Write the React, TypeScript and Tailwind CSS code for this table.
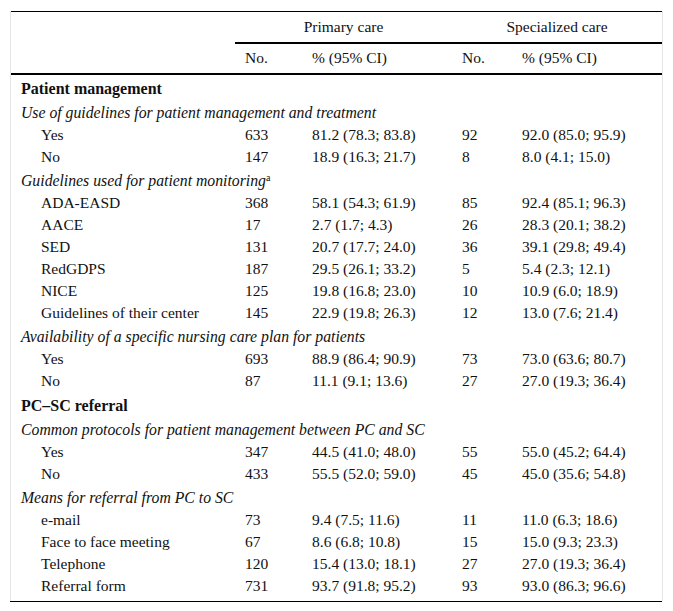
type Row =
  | { kind: "section"; label: string }
  | { kind: "group"; label: string; sup?: string }
  | { kind: "data"; label: string; pcN: string; pcP: string; scN: string; scP: string };

const rows: Row[] = [
  { kind: "section", label: "Patient management" },
  { kind: "group", label: "Use of guidelines for patient management and treatment" },
  { kind: "data", label: "Yes", pcN: "633", pcP: "81.2 (78.3; 83.8)", scN: "92", scP: "92.0 (85.0; 95.9)" },
  { kind: "data", label: "No", pcN: "147", pcP: "18.9 (16.3; 21.7)", scN: "8", scP: "8.0 (4.1; 15.0)" },
  { kind: "group", label: "Guidelines used for patient monitoring", sup: "a" },
  { kind: "data", label: "ADA-EASD", pcN: "368", pcP: "58.1 (54.3; 61.9)", scN: "85", scP: "92.4 (85.1; 96.3)" },
  { kind: "data", label: "AACE", pcN: "17", pcP: "2.7 (1.7; 4.3)", scN: "26", scP: "28.3 (20.1; 38.2)" },
  { kind: "data", label: "SED", pcN: "131", pcP: "20.7 (17.7; 24.0)", scN: "36", scP: "39.1 (29.8; 49.4)" },
  { kind: "data", label: "RedGDPS", pcN: "187", pcP: "29.5 (26.1; 33.2)", scN: "5", scP: "5.4 (2.3; 12.1)" },
  { kind: "data", label: "NICE", pcN: "125", pcP: "19.8 (16.8; 23.0)", scN: "10", scP: "10.9 (6.0; 18.9)" },
  { kind: "data", label: "Guidelines of their center", pcN: "145", pcP: "22.9 (19.8; 26.3)", scN: "12", scP: "13.0 (7.6; 21.4)" },
  { kind: "group", label: "Availability of a specific nursing care plan for patients" },
  { kind: "data", label: "Yes", pcN: "693", pcP: "88.9 (86.4; 90.9)", scN: "73", scP: "73.0 (63.6; 80.7)" },
  { kind: "data", label: "No", pcN: "87", pcP: "11.1 (9.1; 13.6)", scN: "27", scP: "27.0 (19.3; 36.4)" },
  { kind: "section", label: "PC–SC referral" },
  { kind: "group", label: "Common protocols for patient management between PC and SC" },
  { kind: "data", label: "Yes", pcN: "347", pcP: "44.5 (41.0; 48.0)", scN: "55", scP: "55.0 (45.2; 64.4)" },
  { kind: "data", label: "No", pcN: "433", pcP: "55.5 (52.0; 59.0)", scN: "45", scP: "45.0 (35.6; 54.8)" },
  { kind: "group", label: "Means for referral from PC to SC" },
  { kind: "data", label: "e-mail", pcN: "73", pcP: "9.4 (7.5; 11.6)", scN: "11", scP: "11.0 (6.3; 18.6)" },
  { kind: "data", label: "Face to face meeting", pcN: "67", pcP: "8.6 (6.8; 10.8)", scN: "15", scP: "15.0 (9.3; 23.3)" },
  { kind: "data", label: "Telephone", pcN: "120", pcP: "15.4 (13.0; 18.1)", scN: "27", scP: "27.0 (19.3; 36.4)" },
  { kind: "data", label: "Referral form", pcN: "731", pcP: "93.7 (91.8; 95.2)", scN: "93", scP: "93.0 (86.3; 96.6)" },
];

function BodyRow({ row }: { row: Row }) {
  if (row.kind === "section") {
    return (
      <tr>
        <td colSpan={5} className="h-[25px] px-[10px] pt-[3px] align-middle text-[16px] font-bold leading-[22px]">
          {row.label}
        </td>
      </tr>
    );
  }
  if (row.kind === "group") {
    return (
      <tr>
        <td colSpan={5} className="h-[24px] px-[10px] pt-[2px] align-middle text-[15.75px] italic leading-[22px]">
          {row.label}
          {row.sup && <sup className="text-[10px] not-italic">{row.sup}</sup>}
        </td>
      </tr>
    );
  }
  return (
    <tr>
      <td className="h-[22px] pl-[30px] pr-[10px] leading-[22px]">{row.label}</td>
      <td className="px-[10px] leading-[22px]">{row.pcN}</td>
      <td className="px-[10px] leading-[22px]">{row.pcP}</td>
      <td className="px-[10px] leading-[22px]">{row.scN}</td>
      <td className="px-[10px] leading-[22px]">{row.scP}</td>
    </tr>
  );
}

export default function App() {
  return (
    <div className="min-h-[611px] bg-white pl-[10px] pt-[11px] [font-family:'Liberation_Serif','Times_New_Roman',serif] text-[15.5px] text-[#111]">
      <div className="w-[653px] border-x border-[#e6e6e6]">
        <table className="w-[651px] table-fixed border-collapse">
          <colgroup>
            <col className="w-[224px]" />
            <col className="w-[67px]" />
            <col className="w-[150px]" />
            <col className="w-[60px]" />
            <col className="w-[150px]" />
          </colgroup>
          <thead>
            <tr className="border-t border-black">
              <th className="h-[31px]" />
              <th colSpan={2} className="border-b-2 border-black text-center font-normal">
                Primary care
              </th>
              <th colSpan={2} className="border-b-2 border-black text-center font-normal">
                Specialized care
              </th>
            </tr>
            <tr className="border-b-2 border-black">
              <th className="h-[31px]" />
              <th className="px-[10px] text-left font-normal">No.</th>
              <th className="px-[10px] text-left font-normal">% (95% CI)</th>
              <th className="px-[10px] text-left font-normal">No.</th>
              <th className="px-[10px] text-left font-normal">% (95% CI)</th>
            </tr>
          </thead>
          <tbody>
            {rows.map((r, i) => (
              <BodyRow key={i} row={r} />
            ))}
            <tr>
              <td colSpan={5} className="h-[4px]" />
            </tr>
          </tbody>
        </table>
      </div>
      <div className="h-px w-[652px] bg-black" />
    </div>
  );
}
